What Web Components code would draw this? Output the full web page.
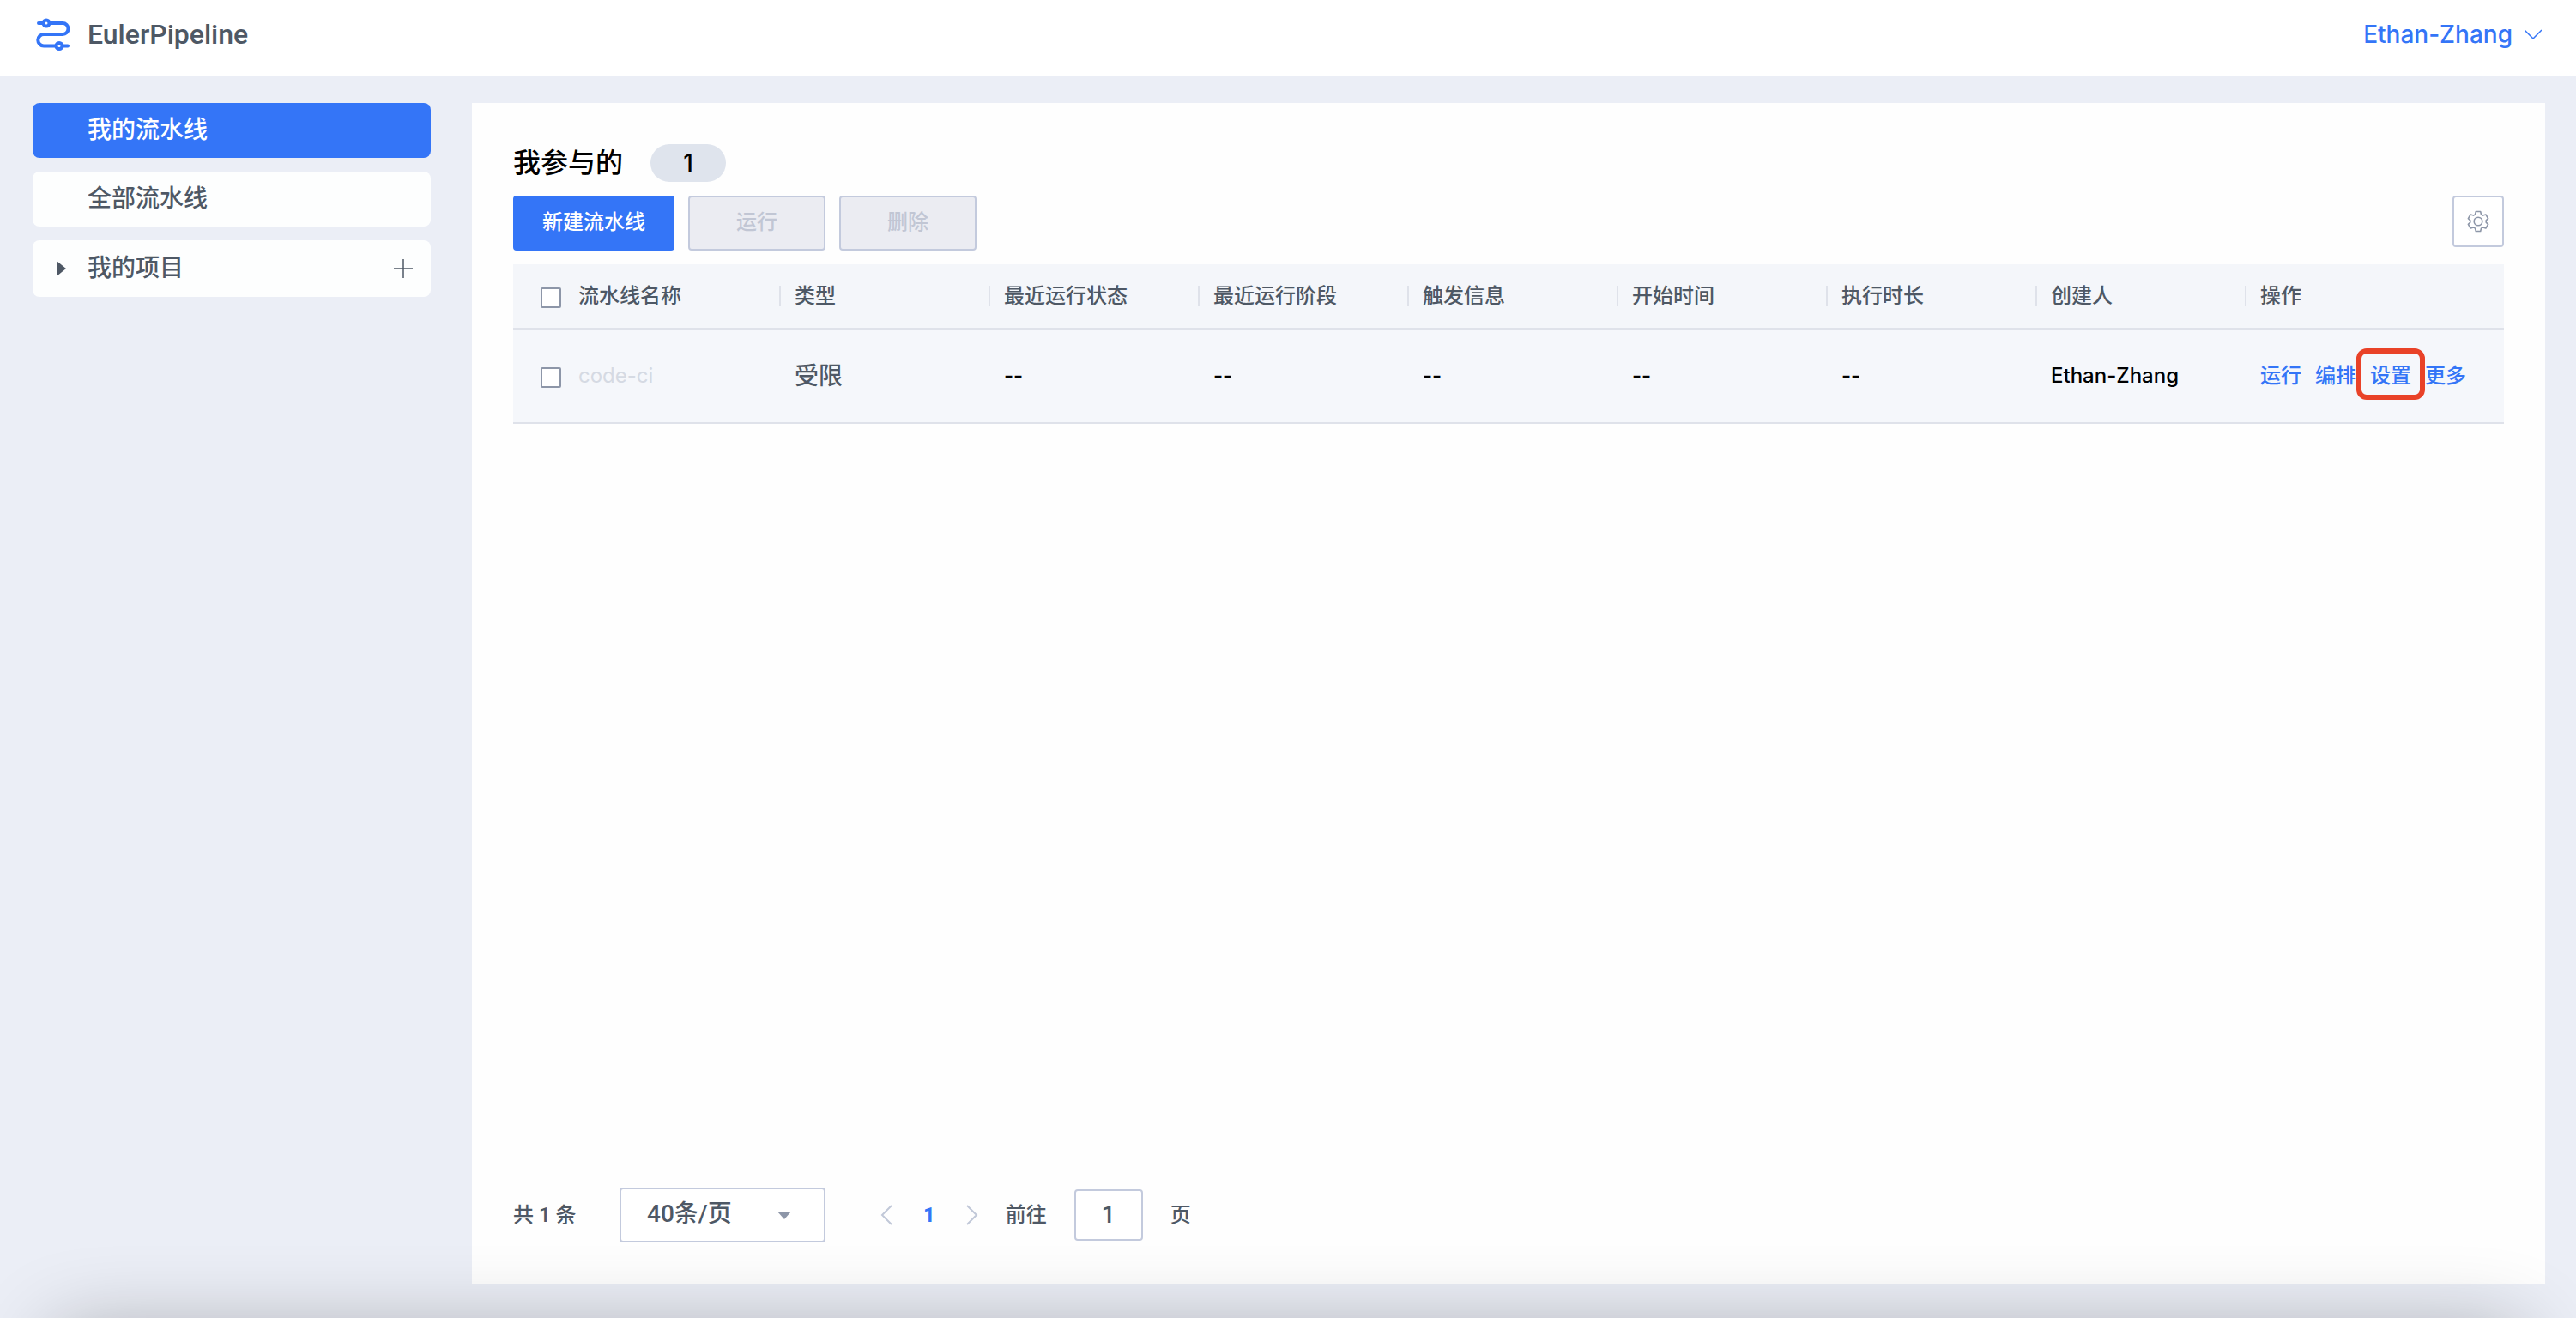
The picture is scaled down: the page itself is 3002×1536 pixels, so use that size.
<!DOCTYPE html>
<html lang="zh-CN">
<head>
<meta charset="utf-8">
<title>EulerPipeline</title>
<style>
  html, body {
    height: 100%;
  }
  body {
    --primary: #3475f7;
    --text: #4e5865;
    --line: #dfe2ea;
    --border: #c3cadd;
    --muted: #8d96a8;
    margin: 0;
    background: #ebeef6;
    color: var(--text);
    font-family: Inter, "Noto Sans CJK SC", sans-serif;
    font-size: 24px;
    font-weight: 500;
    line-height: 32px;
  }
</style>
</head>
<body>
<pipeline-app>
  <app-header slot="header" user="Ethan-Zhang">EulerPipeline</app-header>
  <side-nav slot="nav">
    <nav-item active>我的流水线</nav-item>
    <nav-item>全部流水线</nav-item>
    <nav-item expandable>我的项目</nav-item>
  </side-nav>
  <list-heading count="1">我参与的</list-heading>
  <tool-bar>
    <ui-button kind="primary">新建流水线</ui-button>
    <ui-button disabled>运行</ui-button>
    <ui-button disabled>删除</ui-button>
  </tool-bar>
  <pipeline-table></pipeline-table>
  <page-bar total="1" size="40" page="1"></page-bar>
</pipeline-app>

<script>
/**
 * Create a template element from a markup string.
 *
 * @param {string} html - The markup.
 * @returns {HTMLTemplateElement} The template.
 */
const createTemplate = (html) => {
  const template = document.createElement('template')
  template.innerHTML = html
  return template
}

/**
 * Base class, attaches a shadow root and clones the template into it.
 */
class BaseElement extends HTMLElement {
  constructor () {
    super()
    this.attachShadow({ mode: 'open' })
      .appendChild(this.constructor.template.content.cloneNode(true))
  }

  /**
   * Find an element in the shadow root.
   *
   * @param {string} selector - The selector.
   * @returns {Element} The first match.
   */
  $ (selector) {
    return this.shadowRoot.querySelector(selector)
  }
}

// The page frame: header on top, nav to the left, white panel to the right.
customElements.define('pipeline-app', class extends BaseElement {
  static template = createTemplate(`
<style>
  :host {
    display: flex;
    flex-direction: column;
    min-height: 100%;
  }
  .body {
    flex: 1;
    display: flex;
    gap: 48px;
    padding: 32px 36px 40px 38px;
  }
  main {
    flex: 1;
    min-width: 0;
    display: flex;
    flex-direction: column;
    padding: 48px;
    background: #fefefe;
  }
  /* soft shade along the lower edge of the window */
  .shade {
    position: fixed;
    left: 64px;
    right: 64px;
    bottom: -216px;
    height: 200px;
    box-shadow: 0 0 96px rgba(0, 0, 0, 0.3);
    pointer-events: none;
  }
</style>
<slot name="header"></slot>
<div class="body">
  <slot name="nav"></slot>
  <main><slot></slot></main>
</div>
<div class="shade"></div>
`)
})

customElements.define('app-header', class extends BaseElement {
  static template = createTemplate(`
<style>
  :host {
    display: block;
  }
  header {
    display: flex;
    align-items: center;
    justify-content: space-between;
    height: 80px;
    padding: 0 40px 8px 42px;
    background: #fff;
  }
  a, button {
    display: flex;
    align-items: center;
    color: inherit;
    text-decoration: none;
  }
  a {
    gap: 20px;
    font-family: Roboto, sans-serif;
    font-size: 32px;
    line-height: 40px;
  }
  button {
    gap: 14px;
    padding: 0;
    border: 0;
    background: none;
    color: var(--primary);
    font: inherit;
    font-size: 28px;
    line-height: 40px;
  }
</style>
<header>
  <a href="#">
    <svg width="40" height="40" viewBox="0 0 40 40" fill="none" stroke="#3475f7" stroke-width="4" stroke-linecap="round">
      <path d="M3 7H31a6.5 6.5 0 0 1 0 13H9a6.500 6.500 0 0 0 0 13.500H37"/>
      <circle cx="12" cy="7" r="3.500" fill="#fff"/>
      <circle cx="27" cy="33.500" r="3.500" fill="#fff"/>
    </svg>
    <slot></slot>
  </a>
  <button type="button">
    <span id="user"></span>
    <svg width="20" height="12" viewBox="0 0 20 12" fill="none" stroke="currentColor" stroke-width="1.500"><path d="M0 1l10 10L20 1"/></svg>
  </button>
</header>
`)

  connectedCallback () {
    this.$('#user').textContent = this.getAttribute('user')
  }
})

customElements.define('side-nav', class extends BaseElement {
  static template = createTemplate(`
<style>
  :host {
    display: block;
    width: 464px;
  }
  nav {
    display: flex;
    flex-direction: column;
    gap: 16px;
  }
</style>
<nav><slot></slot></nav>
`)
})

customElements.define('nav-item', class extends BaseElement {
  static template = createTemplate(`
<style>
  :host {
    display: flex;
    align-items: center;
    box-sizing: border-box;
    min-height: 64px;
    padding: 0 20px 0 28px;
    border-radius: 8px;
    background: #fdfefe;
    font-size: 28px;
    line-height: 40px;
  }
  :host([active]) {
    background: var(--primary);
    color: #fff;
  }
  :host([expandable]) {
    min-height: 66px;
  }
  :host(:not([expandable])) svg {
    visibility: hidden;
  }
  :host(:not([expandable])) button {
    display: none;
  }
  .arrow {
    flex: none;
  }
  a {
    flex: 1;
    padding-bottom: 2px;
    color: inherit;
    text-decoration: none;
  }
  button {
    display: flex;
    padding: 0;
    border: 0;
    background: none;
    color: inherit;
  }
</style>
<svg class="arrow" width="36" height="20" viewBox="0 0 36 20" fill="currentColor"><path d="M0 1v18l11-9z"/></svg>
<a href="#"><slot></slot></a>
<button type="button" aria-label="新建项目">
  <svg width="24" height="24" viewBox="0 0 24 24" stroke="currentColor" stroke-width="1.500"><path d="M12 1v22M1 12h22"/></svg>
</button>
`)
})

customElements.define('list-heading', class extends BaseElement {
  static template = createTemplate(`
<style>
  :host {
    display: flex;
    align-items: center;
    gap: 32px;
    margin-bottom: 16px;
    color: #000;
  }
  h1 {
    margin: 0;
    font-size: 32px;
    font-weight: 500;
    line-height: 40px;
  }
  span {
    width: 88px;
    border-radius: 22px;
    background: #dfe4ed;
    font-size: 28px;
    line-height: 44px;
    text-align: center;
  }
</style>
<h1><slot></slot></h1>
<span id="count"></span>
`)

  connectedCallback () {
    this.$('#count').textContent = this.getAttribute('count')
  }
})

customElements.define('tool-bar', class extends BaseElement {
  static template = createTemplate(`
<style>
  :host {
    display: flex;
    align-items: flex-start;
    gap: 16px;
    margin-bottom: 16px;
  }
  .settings {
    display: grid;
    place-items: center;
    width: 60px;
    height: 60px;
    margin-left: auto;
    padding: 0;
    border: 2px solid var(--border);
    border-radius: 4px;
    background: #fff;
    color: var(--muted);
  }
</style>
<slot></slot>
<button class="settings" type="button" aria-label="设置列">
  <svg width="26" height="26" viewBox="0 0 26 26" fill="none" stroke="currentColor" stroke-width="1.600" stroke-linejoin="round">
    <path d="M10.300 1.500h5.400l.8 3.400 2 1.200 3.400-1.100 2.700 4.600-2.400 2.300v2.200l2.400 2.300-2.700 4.600-3.400-1.100-2 1.200-.8 3.400h-5.400l-.8-3.400-2-1.200L4.100 21l-2.700-4.600 2.400-2.300v-2.200L1.400 9.600 4.100 5l3.400 1.100 2-1.200z"/>
    <circle cx="13" cy="13" r="4.800"/>
  </svg>
</button>
`)
})

customElements.define('ui-button', class extends BaseElement {
  static template = createTemplate(`
<style>
  :host {
    display: block;
  }
  button {
    box-sizing: border-box;
    min-width: 160px;
    height: 64px;
    padding: 0 32px 2px;
    border: 2px solid var(--border);
    border-radius: 4px;
    background: #ebecf2;
    color: #c1c6d4;
    font: inherit;
  }
  :host([kind="primary"]) button {
    border-color: var(--primary);
    background: var(--primary);
    color: #fff;
  }
</style>
<button type="button"><slot></slot></button>
`)

  connectedCallback () {
    this.$('button').disabled = this.hasAttribute('disabled')
  }
})

customElements.define('pipeline-table', class extends BaseElement {
  static template = createTemplate(`
<style>
  :host {
    display: block;
    flex: 1;
  }
  table {
    width: 100%;
    table-layout: fixed;
    border-collapse: separate;
    border-spacing: 0;
    background: #f5f7fb;
  }
  .name {
    width: 310px;
  }
  .actions {
    width: 302px;
  }
  th, td {
    box-sizing: border-box;
    padding: 0 16px;
    border-bottom: 2px solid var(--line);
    font-weight: 500;
    text-align: left;
    white-space: nowrap;
  }
  th {
    height: 76px;
    background: #f4f6fa;
  }
  td {
    height: 110px;
    color: #000;
  }
  th:first-child, td:first-child {
    padding-left: 32px;
  }
  th span {
    display: block;
    line-height: 24px;
  }
  th:not(:first-child) {
    padding-left: 0;
  }
  th:not(:first-child) span {
    padding-left: 16px;
    border-left: 2px solid var(--line);
  }
  td:not(:first-child) {
    padding-left: 18px;
  }
  label {
    display: flex;
    align-items: center;
    gap: 20px;
  }
  td label {
    color: #d5dae3;
    font-weight: 400;
  }
  input {
    appearance: none;
    flex: none;
    box-sizing: border-box;
    width: 24px;
    height: 24px;
    margin: 4px 0 0;
    border: 2px solid var(--muted);
    border-radius: 2px;
    background: #fff;
  }
  .kind {
    color: var(--text);
    font-size: 28px;
  }
  .links {
    display: flex;
    gap: 16px;
  }
  a {
    color: var(--primary);
    text-decoration: none;
  }
  .marked {
    position: relative;
  }
  /* frame laid over the link and its neighbours */
  .marked::after {
    content: "";
    position: absolute;
    inset: -16px -16px -12px;
    border: 6px solid #e94228;
    border-radius: 12px;
  }
</style>
<table>
  <colgroup><col class="name"><col span="7"><col class="actions"></colgroup>
  <thead>
    <tr>
      <th><label><input type="checkbox">流水线名称</label></th>
      <th><span>类型</span></th>
      <th><span>最近运行状态</span></th>
      <th><span>最近运行阶段</span></th>
      <th><span>触发信息</span></th>
      <th><span>开始时间</span></th>
      <th><span>执行时长</span></th>
      <th><span>创建人</span></th>
      <th><span>操作</span></th>
    </tr>
  </thead>
  <tbody>
    <tr>
      <td><label><input type="checkbox">code-ci</label></td>
      <td class="kind">受限</td>
      <td>--</td>
      <td>--</td>
      <td>--</td>
      <td>--</td>
      <td>--</td>
      <td>Ethan-Zhang</td>
      <td>
        <div class="links">
          <a href="#">运行</a>
          <a href="#">编排</a>
          <a href="#" class="marked">设置</a>
          <a href="#">更多</a>
        </div>
      </td>
    </tr>
  </tbody>
</table>
`)
})

customElements.define('page-bar', class extends BaseElement {
  static template = createTemplate(`
<style>
  :host {
    display: flex;
    align-items: center;
    font-family: Roboto, "Noto Sans CJK SC", sans-serif;
  }
  #total {
    min-width: 76px;
  }
  .select {
    display: grid;
    align-items: center;
    width: 240px;
    margin: 0 64px 0 48px;
  }
  .select > * {
    grid-area: 1 / 1;
  }
  .select svg {
    justify-self: end;
    margin-right: 40px;
    pointer-events: none;
  }
  select, input {
    box-sizing: border-box;
    border: 2px solid var(--border);
    border-radius: 4px;
    background: #fff;
    color: inherit;
    font: inherit;
    font-size: 28px;
  }
  select {
    appearance: none;
    height: 64px;
    padding: 0 30px 2px;
  }
  input {
    width: 80px;
    height: 60px;
    margin: 0 32px;
    padding: 0 0 2px;
    text-align: center;
  }
  .pager {
    display: flex;
    align-items: center;
    gap: 36px;
    margin-right: 32px;
    color: var(--primary);
    font-weight: 700;
  }
  .pager button {
    display: flex;
    padding: 0;
    border: 0;
    background: none;
    color: #c1c8d8;
  }
  .jump {
    display: flex;
    align-items: center;
  }
</style>
<span id="total"></span>
<div class="select">
  <select aria-label="每页条数"><option></option></select>
  <svg width="16" height="9" viewBox="0 0 16 9" fill="#8d96a8"><path d="M0 0h16L8 9z"/></svg>
</div>
<div class="pager">
  <button type="button" aria-label="上一页"><svg width="14" height="24" viewBox="0 0 14 24" fill="none" stroke="currentColor" stroke-width="2"><path d="M13 1L2 12l11 11"/></svg></button>
  <span id="page"></span>
  <button type="button" aria-label="下一页"><svg width="14" height="24" viewBox="0 0 14 24" fill="none" stroke="currentColor" stroke-width="2"><path d="M1 1l11 11L1 23"/></svg></button>
</div>
<label class="jump">前往<input type="text">页</label>
`)

  connectedCallback () {
    this.$('#total').textContent = `共 ${this.getAttribute('total')} 条`
    this.$('option').textContent = `${this.getAttribute('size')}条/页`
    this.$('#page').textContent = this.getAttribute('page')
    this.$('input').value = this.getAttribute('page')
  }
})
</script>
</body>
</html>
